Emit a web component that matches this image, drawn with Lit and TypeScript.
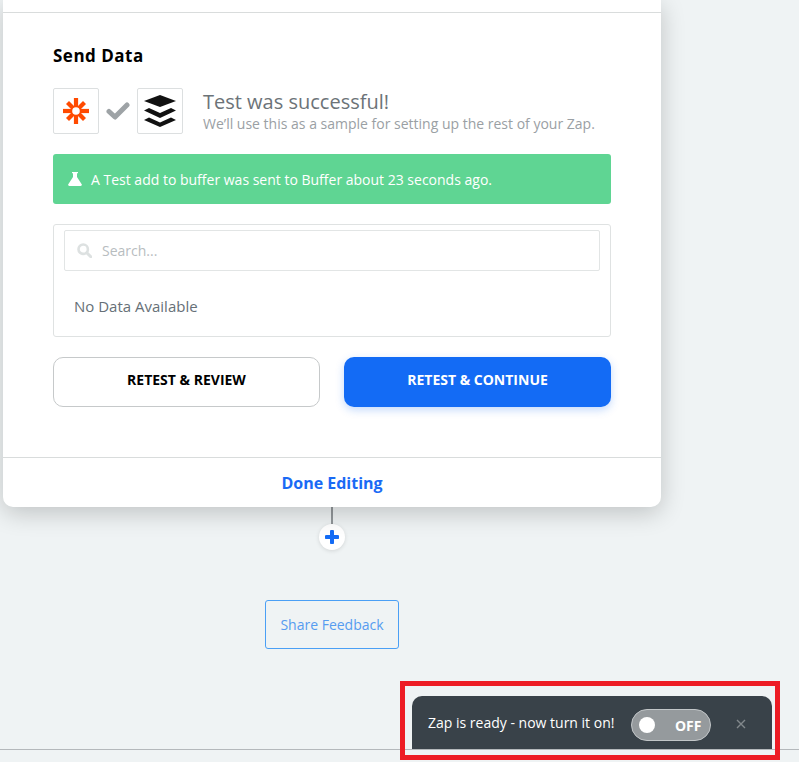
import { LitElement, html, css } from 'lit';
import { customElement } from 'lit/decorators.js';

@customElement('app-root')
export class AppRoot extends LitElement {
  static styles = css`
    :host {
      display: block;
      position: relative;
      height: 762px;
      overflow: hidden;
      background: #eff3f4;
      font-family: 'Open Sans', sans-serif;
      color: #000;
    }

    .page {
      height: 750px;
      box-sizing: border-box;
      border-bottom: 1px solid #b4b8bb;
      display: flex;
      flex-direction: column;
    }

    .card {
      width: 658px;
      height: 507px;
      margin-left: 3px;
      flex: none;
      background: #fff;
      border-radius: 0 0 10px 10px;
      box-shadow: 0 6px 24px rgba(0, 0, 0, 0.2);
      display: flex;
      flex-direction: column;
      position: relative;
    }

    .top-rule {
      height: 13px;
      flex: none;
      box-sizing: border-box;
      border-bottom: 1px solid #d9dcdc;
    }

    .body {
      flex: 1;
      padding: 30px 50px 0;
    }

    h2 {
      margin: 0;
      font-size: 17px;
      line-height: 26px;
      font-weight: 700;
      letter-spacing: 0.5px;
    }

    .result {
      display: flex;
      align-items: center;
      margin-top: 19px;
      height: 46px;
    }

    .app-box {
      width: 46px;
      height: 46px;
      box-sizing: border-box;
      border: 1px solid #dcdfe0;
      border-radius: 2px;
      display: flex;
      align-items: center;
      justify-content: center;
    }

    .check {
      width: 38px;
      display: flex;
      justify-content: center;
    }

    .result-text {
      margin-left: 20px;
    }

    .result-title {
      font-size: 20px;
      line-height: 26px;
      color: #6c7378;
    }

    .result-sub {
      font-size: 14px;
      line-height: 18px;
      color: #9aa0a4;
    }

    .banner {
      margin-top: 20px;
      height: 50px;
      background: #5fd593;
      border-radius: 3px;
      display: flex;
      align-items: center;
      padding-left: 15px;
      gap: 9px;
      color: #fff;
      font-size: 14px;
    }

    .table {
      margin-top: 20px;
      height: 113px;
      box-sizing: border-box;
      border: 1px solid #dfe2e2;
      border-radius: 3px;
      padding: 5px 10px 0;
    }

    .search {
      height: 41px;
      box-sizing: border-box;
      border: 1px solid #e2e5e5;
      border-radius: 2px;
      display: flex;
      align-items: center;
      padding-left: 12px;
      gap: 10px;
      font-size: 14px;
      color: #b8bdbf;
    }

    .empty {
      margin: 25px 0 0 10px;
      font-size: 15px;
      line-height: 20px;
      color: #667077;
    }

    .actions {
      margin-top: 20px;
      display: grid;
      grid-template-columns: 1fr 1fr;
      gap: 24px;
    }

    .btn {
      height: 50px;
      box-sizing: border-box;
      border-radius: 10px;
      display: flex;
      align-items: center;
      justify-content: center;
      padding-bottom: 5px;
      font-size: 14px;
      font-weight: 700;
    }

    .btn.secondary {
      border: 1px solid #c6c9ca;
      background: #fff;
      color: #000;
    }

    .btn.primary {
      background: #136bf5;
      color: #fff;
      box-shadow: 0 3px 8px rgba(19, 107, 245, 0.25);
    }

    .footer {
      height: 50px;
      flex: none;
      box-sizing: border-box;
      border-top: 1px solid #d9dcdc;
      display: flex;
      align-items: center;
      justify-content: center;
      font-size: 16px;
      font-weight: 700;
      color: #1a6af5;
    }

    .connector {
      margin-left: 331px;
      width: 2px;
      height: 17px;
      flex: none;
      background: #92979a;
    }

    .add {
      margin: 0 0 0 319px;
      width: 26px;
      height: 26px;
      flex: none;
      border-radius: 50%;
      background: #fff;
      box-shadow: 0 1px 4px rgba(0, 0, 0, 0.12);
      display: flex;
      align-items: center;
      justify-content: center;
    }

    .feedback {
      margin: 50px 0 0 265px;
      width: 134px;
      height: 49px;
      flex: none;
      box-sizing: border-box;
      border: 1px solid #4a9ff5;
      border-radius: 3px;
      display: flex;
      align-items: center;
      justify-content: center;
      font-size: 14px;
      color: #569cf0;
    }

    .toast {
      position: absolute;
      left: 412px;
      top: 696px;
      width: 360px;
      height: 53px;
      box-sizing: border-box;
      background: #394249;
      border-radius: 10px 10px 0 0;
      display: flex;
      align-items: flex-start;
      padding: 13px 0 0 16px;
      color: #fff;
      font-size: 14px;
    }

    .toast-text {
      margin-top: 1px;
      line-height: 26px;
      white-space: nowrap;
    }

    .toggle {
      margin-left: 17px;
      width: 80px;
      height: 32px;
      box-sizing: border-box;
      border: 1px solid #c2c6c8;
      border-radius: 16px;
      background: #959a9d;
      display: flex;
      align-items: center;
      justify-content: space-between;
      padding: 0 9px 0 7px;
      font-weight: 700;
    }

    .knob {
      width: 16px;
      height: 16px;
      border-radius: 50%;
      background: #fff;
    }

    .close {
      margin: 10px 0 0 25px;
      display: block;
    }

    .highlight {
      position: absolute;
      left: 400px;
      top: 681px;
      width: 380px;
      height: 79px;
      box-sizing: border-box;
      border: 5px solid #ed1c24;
      pointer-events: none;
    }
  `;

  render() {
    return html`
      <div class="page">
        <div class="card">
          <div class="top-rule"></div>
          <div class="body">
            <h2>Send Data</h2>
            <div class="result">
              <div class="app-box">
                <svg width="28" height="28" viewBox="0 0 28 28" fill="#ff4a00">
                  <rect x="11.900" y="1" width="4.200" height="26" />
                  <rect x="1" y="11.900" width="26" height="4.200" />
                  <rect x="11.900" y="2" width="4.200" height="24" transform="rotate(45 14 14)" />
                  <rect x="11.900" y="2" width="4.200" height="24" transform="rotate(-45 14 14)" />
                  <circle cx="14" cy="14" r="3.800" fill="#fff" />
                </svg>
              </div>
              <div class="check">
                <svg width="24" height="18" viewBox="0 0 24 18">
                  <path d="M3 9.500l6 5.500L21 3" fill="none" stroke="#9ea3a6" stroke-width="5" stroke-linecap="round" stroke-linejoin="round" />
                </svg>
              </div>
              <div class="app-box">
                <svg width="32" height="32" viewBox="0 0 32 32" fill="#111">
                  <path d="M16 0L32 6 16 12 0 6z" />
                  <path d="M5 13l11 5 11-5 5 2.500-16 7.500L0 15.500z" />
                  <path d="M5 22.500l11 5 11-5 5 2.500-16 7-16-7z" />
                </svg>
              </div>
              <div class="result-text">
                <div class="result-title">Test was successful!</div>
                <div class="result-sub">We’ll use this as a sample for setting up the rest of your Zap.</div>
              </div>
            </div>

            <div class="banner">
              <svg width="14" height="14" viewBox="0 0 14 14" fill="#fff">
                <path d="M4 0h6v1.200H9V5l4.700 7.200c.5.900-.1 1.800-1.100 1.800H1.400C.4 14-.2 13.100.3 12.200L5 5V1.200H4z" />
              </svg>
              <span>A Test add to buffer was sent to Buffer about 23 seconds ago.</span>
            </div>

            <div class="table">
              <div class="search">
                <svg width="15" height="15" viewBox="0 0 15 15" fill="none" stroke="#dde1e1">
                  <circle cx="6.200" cy="6.200" r="4.700" stroke-width="2.600" />
                  <path d="M9.800 9.800l4 4" stroke-width="3" stroke-linecap="round" />
                </svg>
                <span>Search...</span>
              </div>
              <div class="empty">No Data Available</div>
            </div>

            <div class="actions">
              <div class="btn secondary">RETEST &amp; REVIEW</div>
              <div class="btn primary">RETEST &amp; CONTINUE</div>
            </div>
          </div>
          <div class="footer">Done Editing</div>
        </div>

        <div class="connector"></div>
        <div class="add">
          <svg width="14" height="14" viewBox="0 0 14 14">
            <path d="M7 1.500v11M1.500 7h11" stroke="#136bf5" stroke-width="4" stroke-linecap="round" />
          </svg>
        </div>
        <div class="feedback">Share Feedback</div>
      </div>

      <div class="toast">
        <span class="toast-text">Zap is ready - now turn it on!</span>
        <div class="toggle"><span class="knob"></span><span>OFF</span></div>
        <svg class="close" width="10" height="10" viewBox="0 0 10 10">
          <path d="M1 1l8 8M9 1l-8 8" stroke="#82888c" stroke-width="1.400" />
        </svg>
      </div>
      <div class="highlight"></div>
    `;
  }
}
